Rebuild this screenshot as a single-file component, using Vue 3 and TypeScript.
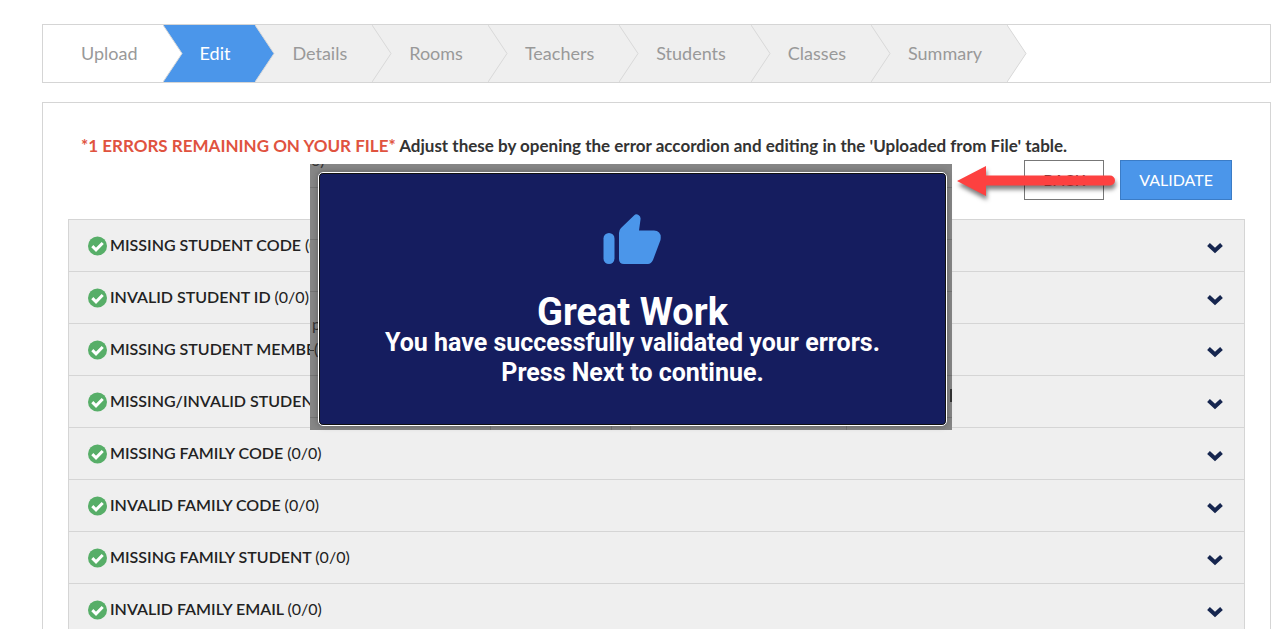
<script setup lang="ts">
interface Step { label: string; active?: boolean; plain?: boolean }
interface Row { title: string; count: string }

const steps: Step[] = [
  { label: 'Upload', plain: true },
  { label: 'Edit', active: true },
  { label: 'Details' },
  { label: 'Rooms' },
  { label: 'Teachers' },
  { label: 'Students' },
  { label: 'Classes' },
  { label: 'Summary' },
]

const rows: Row[] = [
  { title: 'MISSING STUDENT CODE', count: '(0/0)' },
  { title: 'INVALID STUDENT ID', count: '(0/0)' },
  { title: 'MISSING STUDENT MEMBER', count: '(0/0)' },
  { title: 'MISSING/INVALID STUDENT', count: '(0/0)' },
  { title: 'MISSING FAMILY CODE', count: '(0/0)' },
  { title: 'INVALID FAMILY CODE', count: '(0/0)' },
  { title: 'MISSING FAMILY STUDENT', count: '(0/0)' },
  { title: 'INVALID FAMILY EMAIL', count: '(0/0)' },
]
</script>

<template>
  <div class="page">
    <nav class="steps" aria-label="Import steps">
      <a v-for="s in steps" :key="s.label" href="#" class="step" :class="{ active: s.active, plain: s.plain }">
        {{ s.label }}
        <svg class="tip" viewBox="0 0 20 57" width="20" height="57" aria-hidden="true">
          <polygon points="0,0 19,28.5 0,57" />
          <polyline points="0,0 19,28.5 0,57" />
        </svg>
      </a>
    </nav>

    <main class="panel">
      <p class="message"><span class="errors">*1 ERRORS REMAINING ON YOUR FILE*</span> Adjust these by opening the error accordion and editing in the 'Uploaded from File' table.</p>
      <div class="actions">
        <div class="back-wrap">
          <button class="btn" type="button">BACK</button>
          <svg class="pointer" viewBox="0 0 170 50" width="170" height="50" aria-hidden="true">
            <path d="M3 21 32 6v9.500H156a5 5 0 0 1 0 10H32V36Z" />
          </svg>
        </div>
        <button class="btn primary" type="button">VALIDATE</button>
      </div>
      <div class="accordion">
        <button v-for="r in rows" :key="r.title" class="row" type="button" aria-expanded="false">
          <svg class="check" viewBox="0 0 20 20" width="20" height="20" aria-hidden="true">
            <circle cx="10.500" cy="10" r="9.500" />
            <path d="M5.300 10.200 9 13.800 15.700 7" />
          </svg>
          <span class="title">{{ r.title }} <span class="count">{{ r.count }}</span></span>
          <svg class="chevron" viewBox="0 0 18 12" width="18" height="12" aria-hidden="true">
            <path d="M2.500 2.500 9 8.500 15.500 2.500" />
          </svg>
        </button>
      </div>
    </main>

    <div class="backdrop">
      <svg class="underlay" viewBox="0 0 642 266" width="642" height="266" aria-hidden="true">
        <path d="M0 23.500H642M0 75.500H642M0 127.500H642M0 211.500H642M0 253.500H642M180.500 253V266M301.500 253V266M320.500 253V266M536.500 253V266" />
        <text x="1" y="2">0)</text>
        <text x="2" y="166">p</text>
        <text x="4" y="191">(</text>
        <rect x="0" y="186" width="4" height="1" />
        <rect x="640" y="225" width="2" height="13" />
      </svg>
      <section class="dialog" role="dialog" aria-labelledby="dialog-title">
        <svg class="thumb" viewBox="0 0 60 52" width="60" height="52" aria-hidden="true">
          <rect x="0.500" y="20" width="11" height="31" rx="5.500" />
          <path d="M16 20Q16 17 18 15L31 2.500Q33 .5 35.500 2Q38 3.500 37.500 6.500L36 17.500H51Q59 18 57.500 27L50 47Q48 51 45 51H21Q16 51 16 46Z" />
        </svg>
        <h1 id="dialog-title">Great Work</h1>
        <p>You have successfully validated your errors.<br>Press Next to continue.</p>
      </section>
    </div>
  </div>
</template>

<style>
body { background: #fff; overflow: hidden; }
</style>

<style scoped>
.page {
  position: relative;
  box-sizing: border-box;
  height: 100vh;
  overflow: hidden;
  padding: 24px 11px 0 42px;
  font-family: Lato, "Liberation Sans", sans-serif;
}
.steps {
  display: flex;
  border: 1px solid #d5d5d5;
  margin-bottom: 19px;
}
.step {
  position: relative;
  padding: 0 25px 0 37px;
  background: #efefef;
  color: #999;
  font-size: 18px;
  line-height: 57px;
  text-decoration: none;
}
.tip {
  position: absolute;
  z-index: 1;
  left: 100%;
  top: 0;
  fill: #efefef;
}
.tip polyline { fill: none; stroke: #d8d8d8; }
.plain { background: #fff; }
.plain .tip { fill: #fff; }
.plain { padding-left: 38px; }
.active { background: #4b96ea; color: #fff; }
.active .tip { fill: #4b96ea; }
.panel {
  border: 1px solid #d5d5d5;
  border-bottom: 0;
  padding: 31px 25px 0;
}
.message {
  margin: 0 13px;
  font-size: 17px;
  line-height: 24px;
  font-weight: 700;
  color: #333;
  white-space: nowrap;
}
.errors { color: #e0533f; }
.actions {
  display: flex;
  justify-content: flex-end;
  gap: 16px;
  margin: 2px 13px 19px;
}
.back-wrap { position: relative; }
.btn {
  height: 40px;
  padding: 0 18px 1px;
  border: 1px solid #777;
  background: #fff;
  color: #333;
  font: 400 16px Lato, sans-serif;
}
.primary { background: #4b96ea; border-color: #3b7cc6; color: #fff; }
.pointer {
  position: absolute;
  z-index: 3;
  right: -20px;
  top: 0;
  fill: #fd4140;
  filter: drop-shadow(1px 4px 2px rgba(0, 0, 0, 0.5));
}
.accordion { border: 1px solid #d5d5d5; }
.row {
  display: flex;
  align-items: center;
  width: 100%;
  height: 52px;
  padding: 0 20px 2px 18px;
  border: 0;
  border-bottom: 1px solid #d5d5d5;
  background: #efefef;
  color: #222;
  font: 600 16px Lato, sans-serif;
  text-align: left;
}
.title { margin-left: 3px; }
.count { font-weight: 400; }
.check { fill: #57ae68; margin-top: 2px; }
.check path { fill: none; stroke: #fff; stroke-width: 3; }
.chevron { margin-left: auto; margin-top: 7px; fill: none; stroke: #16264f; stroke-width: 4; }
.backdrop {
  position: absolute;
  z-index: 2;
  left: 310px;
  top: 164px;
  box-sizing: border-box;
  width: 642px;
  padding: 8px 5px 4px 8px;
  background: #868686;
}
.underlay { position: absolute; left: 0; top: 0; fill: #333; font-size: 16px; }
.underlay path { fill: none; stroke: #747474; }
.dialog {
  position: relative;
  box-sizing: border-box;
  height: 254px;
  padding-top: 40px;
  border: 1px solid #fff;
  border-radius: 5px;
  background: #151d5f;
  box-shadow: inset 0 0 0 1px #111, 0 0 6px rgba(0, 0, 0, 0.3);
  color: #fff;
  text-align: center;
  font-family: Roboto, sans-serif;
}
.thumb { display: block; margin: 0 auto 31px; fill: #4b96ea; }
.dialog h1 { margin: 0; font-size: 38px; line-height: 32px; font-weight: 700; }
.dialog p { margin: 0; font-size: 25px; line-height: 30px; font-weight: 700; }
</style>
